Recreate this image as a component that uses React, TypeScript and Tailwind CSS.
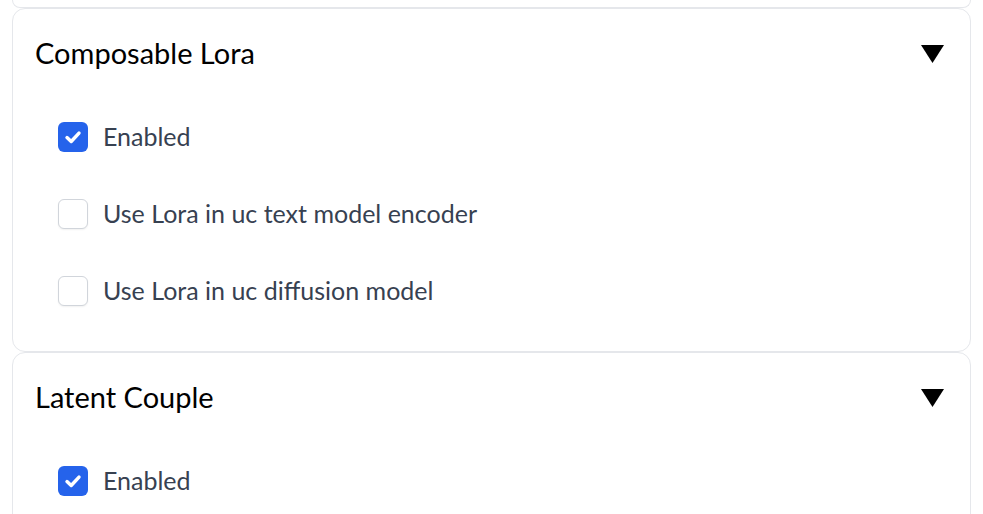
import React from "react";

function Check({ checked }: { checked: boolean }) {
  if (checked) {
    return (
      <div className="w-[30px] h-[30px] rounded-[6px] bg-[#2563eb] flex items-center justify-center shrink-0">
        <svg width="24" height="24" viewBox="0 0 16 16">
          <path d="M4 8.4 L6.8 11 L12 5.4" fill="none" stroke="white" strokeWidth="2.3" strokeLinecap="round" strokeLinejoin="round" />
        </svg>
      </div>
    );
  }
  return (
    <div className="w-[30px] h-[30px] rounded-[6px] bg-white border border-[#d1d5db] shadow-[0_1px_2px_rgba(0,0,0,0.06)] shrink-0" />
  );
}

function Row({ label, checked }: { label: string; checked: boolean }) {
  return (
    <div className="h-[77px] flex items-center pl-[45px]">
      <Check checked={checked} />
      <span className="ml-[15px] text-[25px] text-[#374151] leading-none">{label}</span>
    </div>
  );
}

function Triangle() {
  return (
    <svg width="23" height="18" viewBox="0 0 23 18">
      <path d="M0 0 L23 0 L11.5 18 Z" fill="black" />
    </svg>
  );
}

function Card({ title, rows }: { title: string; rows: { label: string; checked: boolean }[] }) {
  return (
    <div className="border border-[#e5e7eb] rounded-[13px] bg-white pl-[22px] pr-[26px] pt-[25px] pb-[22px]">
      <div className="h-[40px] flex items-center justify-between">
        <span className="text-[29px] text-black leading-none -mt-[3px]">{title}</span>
        <Triangle />
      </div>
      <div className="mt-[24px] -ml-[22px]">
        {rows.map((r) => (
          <Row key={r.label} label={r.label} checked={r.checked} />
        ))}
      </div>
    </div>
  );
}

export default function App() {
  return (
    <div
      className="w-[983px] h-[514px] overflow-hidden bg-white px-[12px]"
      style={{ fontFamily: '"Lato", "Noto Sans", sans-serif' }}
    >
      <div className="h-[8px] border-x border-b border-[#e5e7eb] rounded-b-[13px]" />
      <Card
        title="Composable Lora"
        rows={[
          { label: "Enabled", checked: true },
          { label: "Use Lora in uc text model encoder", checked: false },
          { label: "Use Lora in uc diffusion model", checked: false },
        ]}
      />
      <Card title="Latent Couple" rows={[{ label: "Enabled", checked: true }]} />
    </div>
  );
}
